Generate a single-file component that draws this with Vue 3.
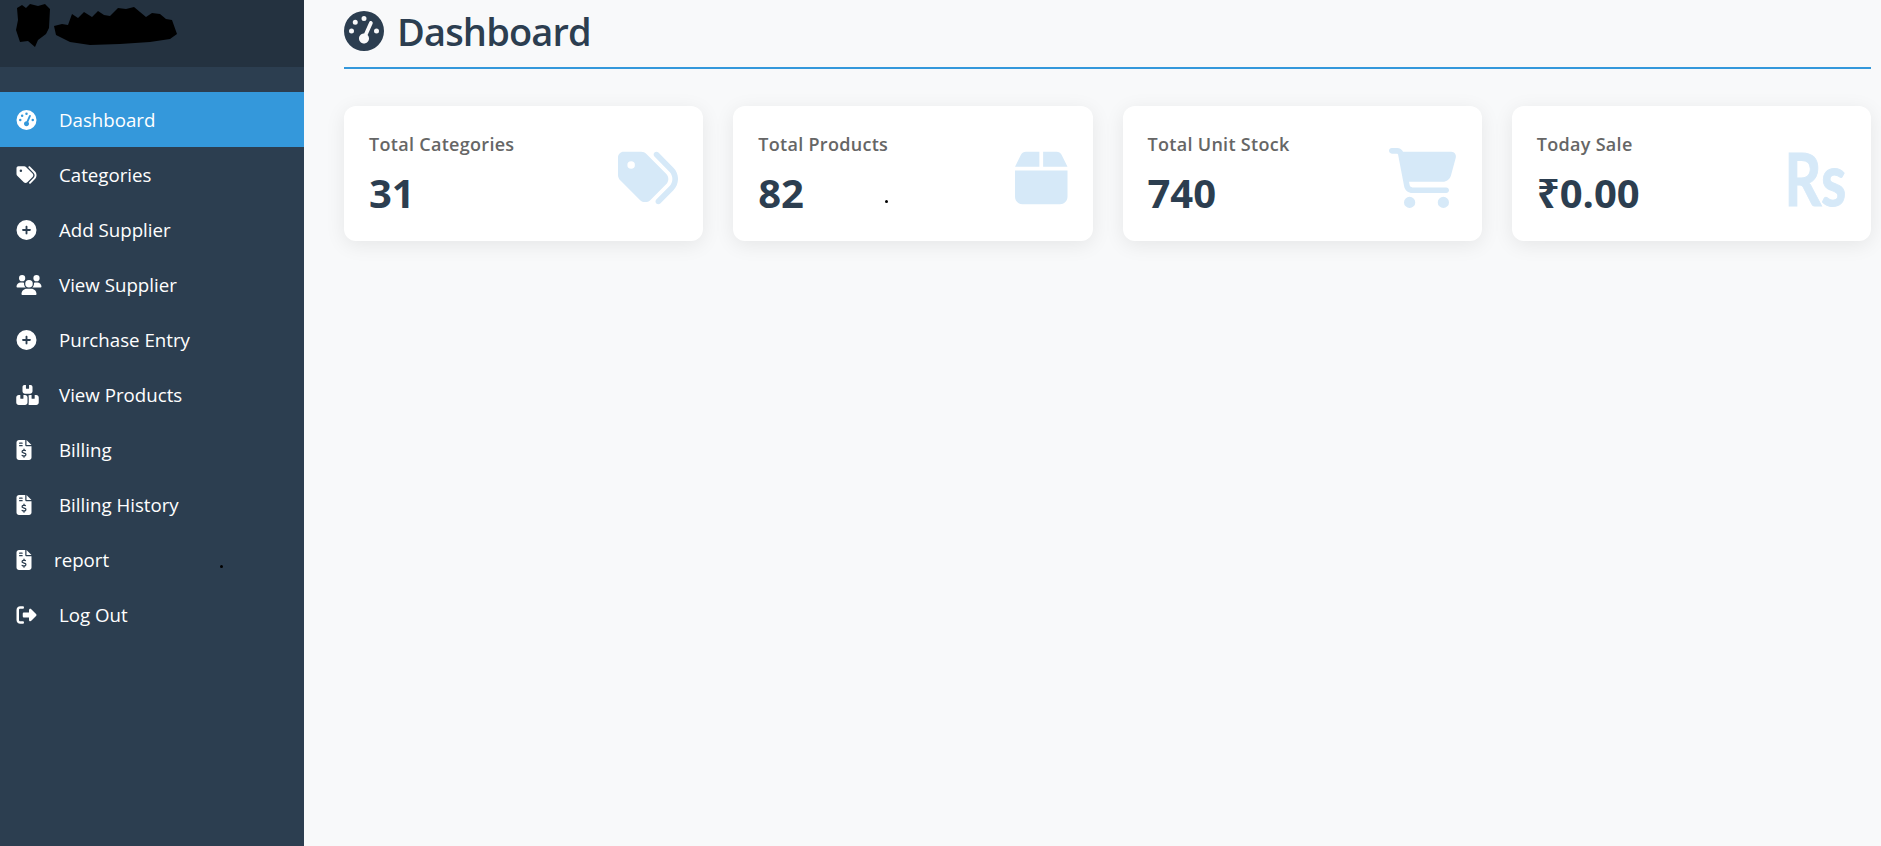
<template>
  <div class="layout">
    <aside class="sidebar">
      <div class="brand">
        <svg class="scribble" viewBox="0 0 178 50" aria-hidden="true">
          <path d="M17 8L22 5 26 8 30 4 38 6 45 4 50 9 49 28 46 34 38 40 35 47 28 41 20 42 16 30 18 20Z" />
          <path d="M54 26L62 24 68 25 72 14 78 18 84 12 92 17 98 11 104 15 110 16 118 8 126 9 134 7 140 12 146 17 152 13 160 14 166 19 172 20 177 34 170 39 150 42 120 44 90 45 70 42 56 35Z" />
        </svg>
      </div>
      <nav class="nav">
        <a v-for="item in menu" :key="item.label" class="nav-item" :class="{ active: item.active, tight: item.tight }">
          <svg class="nav-icon" :viewBox="item.box" :style="{ width: item.w + 'px' }" aria-hidden="true"><path :d="item.d" /></svg>
          <span>{{ item.label }}</span>
        </a>
      </nav>
      <i class="speck speck-side"></i>
    </aside>

    <main class="main">
      <h1 class="page-title">
        <svg class="title-icon" viewBox="0 0 512 512" aria-hidden="true"><path :d="icons.gauge" /></svg>
        Dashboard
      </h1>
      <section class="cards">
        <article v-for="card in cards" :key="card.label" class="card">
          <div class="card-text">
            <div class="card-label">{{ card.label }}</div>
            <div class="card-value">{{ card.value }}</div>
          </div>
          <svg v-if="card.d" class="card-icon" :viewBox="card.box" :style="{ width: card.w + 'px' }" aria-hidden="true"><path :d="card.d" /></svg>
          <span v-else class="card-rs">Rs</span>
          <i v-if="card.speck" class="speck speck-card"></i>
        </article>
      </section>
    </main>
  </div>
</template>

<script setup>
const icons = {
  gauge: 'M0 256a256 256 0 1 1 512 0A256 256 0 1 1 0 256zM288 96a32 32 0 1 0 -64 0 32 32 0 1 0 64 0zM256 416c35.3 0 64-28.7 64-64c0-17.4-6.9-33.1-18.1-44.6L366 161.7c5.3-12.1-.2-26.3-12.3-31.6s-26.3 .2-31.6 12.3L257.9 288c-.6 0-1.3 0-1.9 0c-35.3 0-64 28.7-64 64s28.7 64 64 64zM176 144a32 32 0 1 0 -64 0 32 32 0 1 0 64 0zM96 288a32 32 0 1 0 0-64 32 32 0 1 0 0 64zm352-32a32 32 0 1 0 -64 0 32 32 0 1 0 64 0z',
  tags: 'M345 39.1L472.8 168.4c52.4 53 52.4 138.2 0 191.2L360.8 472.9c-9.3 9.4-24.5 9.5-33.9 .2s-9.5-24.5-.2-33.9L438.6 325.9c33.9-34.3 33.9-89.4 0-123.7L310.9 72.9c-9.3-9.4-9.2-24.6 .2-33.9s24.6-9.2 33.9 .2zM0 229.5V80C0 53.5 21.5 32 48 32H197.5c17 0 33.3 6.7 45.3 18.7l168 168c25 25 25 65.5 0 90.5L277.3 442.7c-25 25-65.5 25-90.5 0l-168-168C6.7 262.7 0 246.5 0 229.5zM144 144a32 32 0 1 0 -64 0 32 32 0 1 0 64 0z',
  plus: 'M256 512A256 256 0 1 0 256 0a256 256 0 1 0 0 512zM232 344V280H168c-13.3 0-24-10.7-24-24s10.7-24 24-24h64V168c0-13.3 10.7-24 24-24s24 10.7 24 24v64h64c13.3 0 24 10.7 24 24s-10.7 24-24 24H280v64c0 13.3-10.7 24-24 24s-24-10.7-24-24z',
  users: 'M144 0a80 80 0 1 1 0 160A80 80 0 1 1 144 0zM512 0a80 80 0 1 1 0 160A80 80 0 1 1 512 0zM0 298.7C0 239.8 47.8 192 106.7 192h42.7c15.9 0 31 3.5 44.6 9.7c-1.3 7.2-1.9 14.7-1.9 22.3c0 38.2 16.8 72.5 43.3 96c-.2 0-.4 0-.7 0H21.3C9.6 320 0 310.4 0 298.7zM405.3 320c-.2 0-.4 0-.7 0c26.6-23.5 43.3-57.8 43.3-96c0-7.6-.7-15-1.9-22.3c13.6-6.3 28.7-9.7 44.6-9.7h42.7C592.2 192 640 239.8 640 298.7c0 11.8-9.6 21.3-21.3 21.3H405.3zM224 224a96 96 0 1 1 192 0 96 96 0 1 1 -192 0zM128 485.3C128 411.7 187.7 352 261.3 352H378.7C452.3 352 512 411.7 512 485.3c0 14.7-11.9 26.7-26.7 26.7H154.7c-14.7 0-26.7-11.9-26.7-26.7z',
  boxes: 'M248 0H208c-26.5 0-48 21.5-48 48V160c0 35.3 28.7 64 64 64H352c35.3 0 64-28.7 64-64V48c0-26.5-21.5-48-48-48H328V80c0 8.8-7.2 16-16 16H264c-8.8 0-16-7.2-16-16V0zM64 256c-35.3 0-64 28.7-64 64V448c0 35.3 28.7 64 64 64H224c35.3 0 64-28.7 64-64V320c0-35.3-28.7-64-64-64H184v80c0 8.8-7.2 16-16 16H120c-8.8 0-16-7.2-16-16V256H64zM352 512H512c35.3 0 64-28.7 64-64V320c0-35.3-28.7-64-64-64H472v80c0 8.8-7.2 16-16 16H408c-8.8 0-16-7.2-16-16V256H352c-15 0-28.8 5.1-39.7 13.8c4.9 15.2 7.7 31.4 7.7 48.2V448c0 16.8-2.8 33-7.7 48.2C323.2 506.9 337 512 352 512z',
  invoice: 'M64 0C28.7 0 0 28.7 0 64V448c0 35.3 28.7 64 64 64H320c35.3 0 64-28.7 64-64V160H256c-17.7 0-32-14.3-32-32V0H64zM256 0V128H384L256 0zM64 80c0-8.8 7.2-16 16-16h64c8.8 0 16 7.2 16 16s-7.2 16-16 16H80c-8.8 0-16-7.2-16-16zm0 64c0-8.8 7.2-16 16-16h64c8.8 0 16 7.2 16 16s-7.2 16-16 16H80c-8.8 0-16-7.2-16-16zm128 72c8.8 0 16 7.2 16 16v17.3c8.5 1.2 16.7 3.1 24.1 5.1c8.5 2.3 13.6 11 11.3 19.6s-11 13.6-19.6 11.3c-11.1-3-22-5.2-32.1-5.3c-8.4-.1-17.4 1.8-23.6 5.5c-5.7 3.4-8.1 7.3-8.1 12.8c0 3.7 1.3 6.5 7.3 10.1c6.9 4.1 16.6 7.1 29.2 10.9l.5 .1c11.3 3.4 25.3 7.6 36.3 14.6c12.1 7.6 22.4 19.7 22.7 38.2c.3 19.3-9.6 33.3-22.9 41.6c-7.7 4.8-16.4 7.6-25.1 9.1V440c0 8.8-7.2 16-16 16s-16-7.2-16-16V422.2c-11.2-2.1-21.7-5.7-30.9-8.9c-2.1-.7-4.2-1.4-6.2-2.1c-8.4-2.8-12.9-11.9-10.1-20.2s11.9-12.9 20.2-10.1c2.5 .8 4.8 1.6 7.1 2.4c13.6 4.6 24.6 8.4 36.3 8.7c9.1 .3 17.9-1.7 23.7-5.3c5.1-3.2 7.9-7.3 7.8-14c-.1-4.6-1.8-7.8-7.7-11.6c-6.8-4.3-16.5-7.4-29-11.2l-1.6-.5c-11-3.3-24.3-7.3-34.8-13.7c-12-7.2-22.6-18.9-22.7-37.3c-.1-19.4 10.8-32.8 23.8-40.5c7.5-4.4 15.8-7.2 24.1-8.7V232c0-8.8 7.2-16 16-16z',
  logout: 'M377.9 105.9L500.7 228.7c7.2 7.2 11.3 17.1 11.3 27.3s-4.1 20.1-11.3 27.3L377.9 406.1c-6.4 6.4-15 9.9-24 9.9c-18.7 0-33.9-15.2-33.9-33.9l0-62.1-128 0c-17.7 0-32-14.3-32-32l0-64c0-17.7 14.3-32 32-32l128 0 0-62.1c0-18.7 15.2-33.9 33.9-33.9c9 0 17.6 3.6 24 9.9zM160 96L96 96c-17.7 0-32 14.3-32 32l0 256c0 17.7 14.3 32 32 32l64 0c17.7 0 32 14.3 32 32s-14.3 32-32 32l-64 0c-53 0-96-43-96-96L0 128C0 75 43 32 96 32l64 0c17.7 0 32 14.3 32 32s-14.3 32-32 32z',
  box: 'M50.7 58.5L0 160H208V32H93.7C75.5 32 58.9 42.3 50.7 58.5zM240 160H448L397.3 58.5C389.1 42.3 372.5 32 354.3 32H240V160zm208 32H0V416c0 35.3 28.7 64 64 64H384c35.3 0 64-28.7 64-64V192z',
  cart: 'M0 24C0 10.7 10.7 0 24 0H69.5c22 0 41.5 12.8 50.6 32h411c26.3 0 45.5 25 38.6 50.4l-41 152.3c-8.5 31.4-37 53.3-69.5 53.3H170.7l5.4 28.5c2.2 11.3 12.1 19.5 23.6 19.5H488c13.3 0 24 10.7 24 24s-10.7 24-24 24H199.7c-34.6 0-64.3-24.6-70.7-58.5L77.4 54.5c-.7-3.8-4-6.5-7.9-6.5H24C10.7 48 0 37.3 0 24zM128 464a48 48 0 1 1 96 0 48 48 0 1 1 -96 0zm336-48a48 48 0 1 1 0 96 48 48 0 1 1 0-96z'
}

const menu = [
  { label: 'Dashboard', d: icons.gauge, box: '0 0 512 512', w: 21, active: true },
  { label: 'Categories', d: icons.tags, box: '0 0 512 512', w: 21 },
  { label: 'Add Supplier', d: icons.plus, box: '0 0 512 512', w: 21 },
  { label: 'View Supplier', d: icons.users, box: '0 0 640 512', w: 26 },
  { label: 'Purchase Entry', d: icons.plus, box: '0 0 512 512', w: 21 },
  { label: 'View Products', d: icons.boxes, box: '0 0 576 512', w: 23 },
  { label: 'Billing', d: icons.invoice, box: '0 0 384 512', w: 16 },
  { label: 'Billing History', d: icons.invoice, box: '0 0 384 512', w: 16 },
  { label: 'report', d: icons.invoice, box: '0 0 384 512', w: 16, tight: true },
  { label: 'Log Out', d: icons.logout, box: '0 0 512 512', w: 21 }
]

const cards = [
  { label: 'Total Categories', value: '31', d: icons.tags, box: '0 0 512 512', w: 60 },
  { label: 'Total Products', value: '82', d: icons.box, box: '0 0 448 512', w: 52.5, speck: true },
  { label: 'Total Unit Stock', value: '740', d: icons.cart, box: '0 0 576 512', w: 67.5 },
  { label: 'Today Sale', value: '₹0.00' }
]
</script>

<style scoped>
.layout {
  display: flex;
  height: 846px;
  overflow: hidden;
  background: #f8f9fa;
  font-family: "Open Sans", "Noto Sans", sans-serif;
}
.sidebar {
  position: relative;
  flex: 0 0 304px;
  background: #2c3e50;
  color: #fff;
}
.brand {
  height: 67px;
  background: #243240;
  margin-bottom: 25px;
}
.scribble {
  display: block;
  width: 178px;
  height: 50px;
  fill: #000;
}
.nav { display: flex; flex-direction: column; }
.nav-item {
  display: flex;
  align-items: center;
  justify-content: space-between;
  height: 55px;
  padding-left: 16px;
  font-size: 18.7px;
}
.nav-item.active { background: #3498db; }
.nav-item span { width: 245px; }
.nav-item.tight span { width: 250px; }
.nav-icon {
  flex: none;
  height: 20px;
  fill: #fff;
}
.main {
  flex: 1;
  min-width: 0;
  padding: 0 10px 0 40px;
}
.page-title {
  display: flex;
  align-items: center;
  gap: 13px;
  height: 69px;
  margin: 0 0 37px;
  padding-bottom: 5px;
  box-sizing: border-box;
  border-bottom: 2px solid #3498db;
  color: #2c3e50;
  font-size: 38px;
  font-weight: 600;
  letter-spacing: -0.85px;
}
.title-icon { width: 40px; height: 40px; fill: #2c3e50; flex: none; }
.cards {
  display: grid;
  grid-template-columns: repeat(4, 1fr);
  gap: 30px;
}
.card {
  position: relative;
  display: flex;
  align-items: flex-start;
  justify-content: space-between;
  height: 135px;
  padding: 25px 25px 0;
  box-sizing: border-box;
  background: #fff;
  border-radius: 12px;
  box-shadow: 0 4px 20px rgba(0, 0, 0, 0.08);
}
.card-label {
  color: #666;
  font-size: 18px;
  font-weight: 600;
  letter-spacing: 0.3px;
  line-height: 26px;
}
.card-value {
  color: #2c3e50;
  font-size: 40px;
  font-weight: 700;
  line-height: 54px;
  margin-top: 9px;
}
.card-icon { flex: none; height: 60px; margin-top: 17px; fill: #d6e9f8; }
.card-rs {
  margin-top: 17px;
  color: #d6e9f8;
  font-family: "Lato", sans-serif;
  font-size: 72px;
  font-weight: 700;
  line-height: 60px;
  -webkit-text-stroke: 1px #d6e9f8;
  transform: scaleX(0.8);
  transform-origin: right center;
}
.speck {
  position: absolute;
  width: 3px;
  height: 3px;
  background: #000;
  border-radius: 50%;
}
.speck-side { left: 220px; top: 565px; }
.speck-card { left: 152px; top: 94px; }
</style>

<style>
html, body { margin: 0; overflow: hidden; }
</style>
